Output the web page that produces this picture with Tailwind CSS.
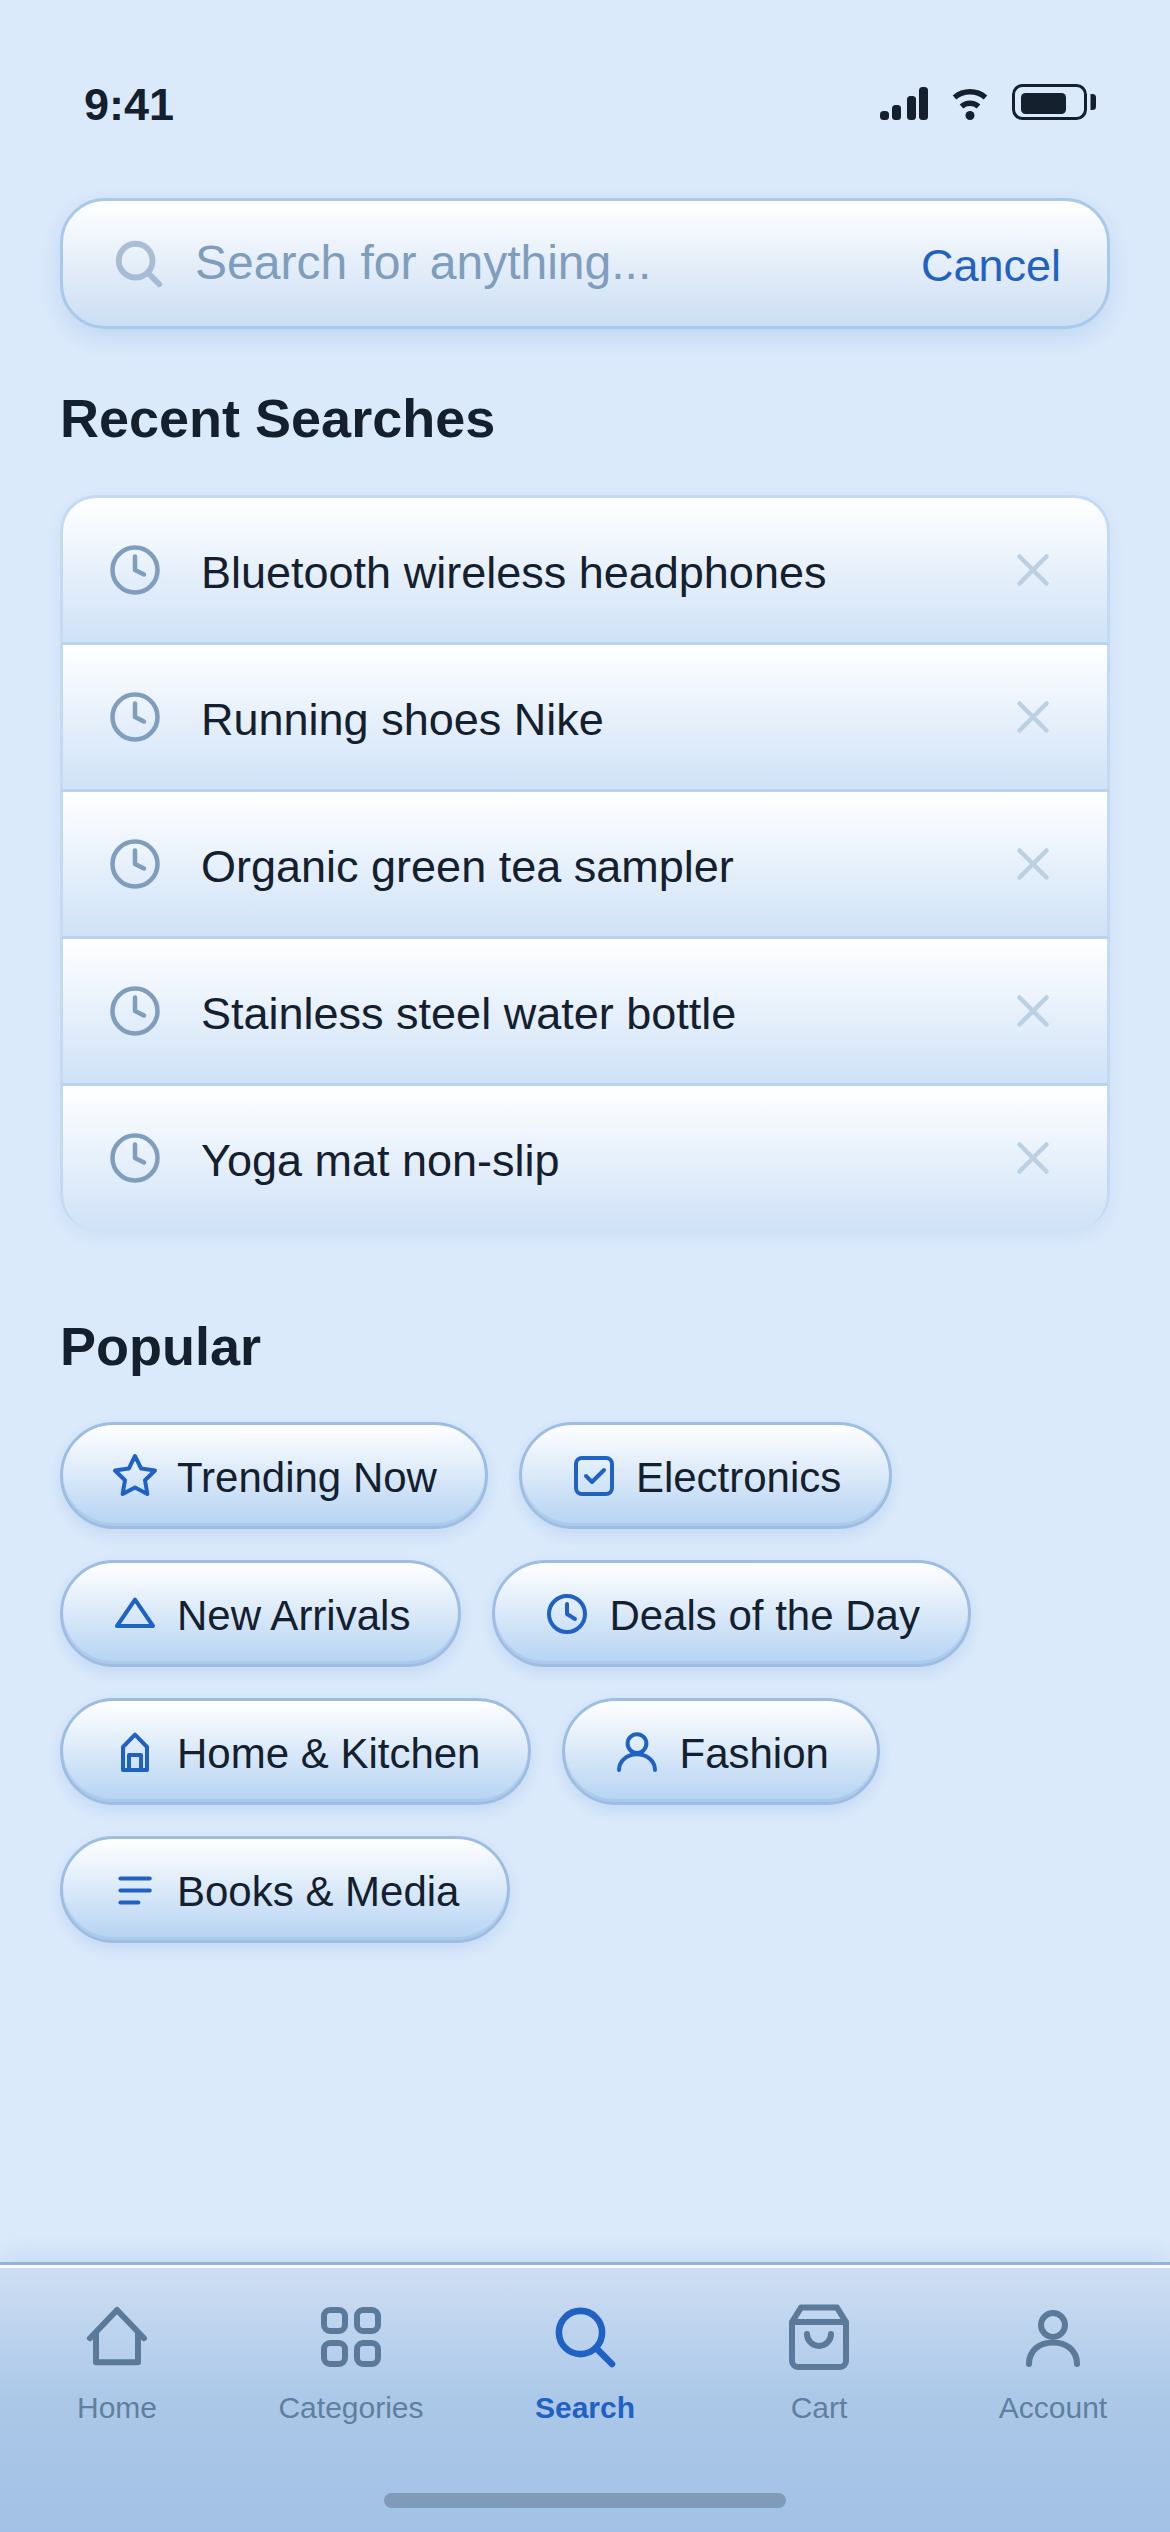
<!DOCTYPE html>
<html>

<head>
    <title>Search</title>
    <meta charset="UTF-8">
    <meta name="viewport" content="width=device-width, initial-scale=1.0">
    <script src="https://cdn.jsdelivr.net/npm/@tailwindcss/browser@4"></script>
</head>

<body class="bg-[#dbeafb] font-['Liberation_Sans',Arial,sans-serif] text-[#14202e]">
    <div class="flex flex-col w-[1170px] h-[2532px] overflow-hidden">

        <!-- Status bar -->
        <div class="h-[198px] shrink-0 pl-[84px] pr-[74px] pt-[79px] flex justify-between items-start">
            <span class="text-[45px] leading-[52px] font-bold">9:41</span>
            <svg class="mt-[5px]" width="216" height="36" viewBox="879 84 216 36" fill="#14202e">
                <rect x="879" y="111" width="9" height="9" rx="3.5" />
                <rect x="891" y="105" width="9" height="15" rx="3.5" />
                <rect x="906" y="96" width="9" height="24" rx="3.5" />
                <rect x="918" y="87" width="9" height="33" rx="3.5" />
                <circle cx="969" cy="115.5" r="4.5" />
                <path d="M953.500 97.500a24 24 0 0 1 31 0M960.500 106.500a13 13 0 0 1 17 0" fill="none" stroke="#14202e" stroke-width="5.500" />
                <rect x="1012.500" y="85.500" width="72" height="33" rx="9" fill="none" stroke="#14202e" stroke-width="3" />
                <rect x="1020" y="93" width="45" height="21" rx="4.500" />
                <path d="M1089.500 94h2a3.500 3.500 0 0 1 3.500 3.500v9a3.500 3.500 0 0 1-3.500 3.500h-2z" />
            </svg>
        </div>

        <!-- Search box -->
        <div class="mx-[60px] h-[131px] shrink-0 flex items-center pl-[49px] pr-[46px] rounded-[45px] border-[3px] border-[#a9c9ea] bg-gradient-to-b from-white to-[#cbdef3] shadow-[0_9px_24px_rgba(100,150,210,0.22)]">
            <svg class="shrink-0 opacity-60" width="54" height="54" viewBox="0 0 24 24" fill="none" stroke="#7f9dbd" stroke-width="2.600" stroke-linecap="round">
                <circle cx="10.500" cy="10.500" r="7.500" />
                <path d="M16 16l5 5" />
            </svg>
            <input type="text" placeholder="Search for anything..." class="flex-1 min-w-0 ml-[29px] mb-[2px] text-[48px] bg-transparent outline-none placeholder:text-[#7f9dbd]">
            <span class="text-[45px] leading-[52px] text-[#1f62c4] mt-[5px]">Cancel</span>
        </div>

        <h2 class="mt-[58px] mx-[60px] text-[54px] leading-[62px] font-bold">Recent Searches</h2>

        <!-- Recent searches -->
        <div class="mt-[46px] mx-[60px] rounded-[36px] shadow-[0_6px_18px_rgba(100,150,210,0.12)]">
            <div class="h-[150px] flex items-center pl-[45px] pr-[47px] gap-[39px] rounded-t-[36px] border-[3px] border-[#c3daf2] border-b-[#b9d3ef] bg-gradient-to-b from-white to-[#cfe2f7]">
                <svg class="shrink-0" width="54" height="54" viewBox="0 0 24 24" fill="none" stroke="#7f9dbd" stroke-width="2" stroke-linecap="round" stroke-linejoin="round"><circle cx="12" cy="12" r="10" /><path d="M12 6v6l4 2" /></svg>
                <span class="flex-1 mt-[6px] text-[45px] leading-[52px]">Bluetooth wireless headphones</span>
                <svg class="shrink-0" width="54" height="54" viewBox="0 0 24 24" fill="none" stroke="#bcd0e3" stroke-width="2" stroke-linecap="round"><path d="M6 6l12 12M18 6L6 18" /></svg>
            </div>
            <div class="h-[147px] flex items-center pl-[45px] pr-[47px] gap-[39px] border-x-[3px] border-b-[3px] border-x-[#c3daf2] border-b-[#b9d3ef] bg-gradient-to-b from-white to-[#cfe2f7]">
                <svg class="shrink-0" width="54" height="54" viewBox="0 0 24 24" fill="none" stroke="#7f9dbd" stroke-width="2" stroke-linecap="round" stroke-linejoin="round"><circle cx="12" cy="12" r="10" /><path d="M12 6v6l4 2" /></svg>
                <span class="flex-1 mt-[6px] text-[45px] leading-[52px]">Running shoes Nike</span>
                <svg class="shrink-0" width="54" height="54" viewBox="0 0 24 24" fill="none" stroke="#bcd0e3" stroke-width="2" stroke-linecap="round"><path d="M6 6l12 12M18 6L6 18" /></svg>
            </div>
            <div class="h-[147px] flex items-center pl-[45px] pr-[47px] gap-[39px] border-x-[3px] border-b-[3px] border-x-[#c3daf2] border-b-[#b9d3ef] bg-gradient-to-b from-white to-[#cfe2f7]">
                <svg class="shrink-0" width="54" height="54" viewBox="0 0 24 24" fill="none" stroke="#7f9dbd" stroke-width="2" stroke-linecap="round" stroke-linejoin="round"><circle cx="12" cy="12" r="10" /><path d="M12 6v6l4 2" /></svg>
                <span class="flex-1 mt-[6px] text-[45px] leading-[52px]">Organic green tea sampler</span>
                <svg class="shrink-0" width="54" height="54" viewBox="0 0 24 24" fill="none" stroke="#bcd0e3" stroke-width="2" stroke-linecap="round"><path d="M6 6l12 12M18 6L6 18" /></svg>
            </div>
            <div class="h-[147px] flex items-center pl-[45px] pr-[47px] gap-[39px] border-x-[3px] border-b-[3px] border-x-[#c3daf2] border-b-[#b9d3ef] bg-gradient-to-b from-white to-[#cfe2f7]">
                <svg class="shrink-0" width="54" height="54" viewBox="0 0 24 24" fill="none" stroke="#7f9dbd" stroke-width="2" stroke-linecap="round" stroke-linejoin="round"><circle cx="12" cy="12" r="10" /><path d="M12 6v6l4 2" /></svg>
                <span class="flex-1 mt-[6px] text-[45px] leading-[52px]">Stainless steel water bottle</span>
                <svg class="shrink-0" width="54" height="54" viewBox="0 0 24 24" fill="none" stroke="#bcd0e3" stroke-width="2" stroke-linecap="round"><path d="M6 6l12 12M18 6L6 18" /></svg>
            </div>
            <div class="h-[144px] flex items-center pl-[45px] pr-[47px] gap-[39px] rounded-b-[36px] border-x-[3px] border-x-[#c3daf2] bg-gradient-to-b from-white to-[#cfe2f7]">
                <svg class="shrink-0" width="54" height="54" viewBox="0 0 24 24" fill="none" stroke="#7f9dbd" stroke-width="2" stroke-linecap="round" stroke-linejoin="round"><circle cx="12" cy="12" r="10" /><path d="M12 6v6l4 2" /></svg>
                <span class="flex-1 mt-[6px] text-[45px] leading-[52px]">Yoga mat non-slip</span>
                <svg class="shrink-0" width="54" height="54" viewBox="0 0 24 24" fill="none" stroke="#bcd0e3" stroke-width="2" stroke-linecap="round"><path d="M6 6l12 12M18 6L6 18" /></svg>
            </div>
        </div>

        <h2 class="mt-[85px] mx-[60px] text-[54px] leading-[62px] font-bold">Popular</h2>

        <!-- Popular chips -->
        <div class="mt-[45px] mx-[60px] flex flex-col gap-[31px]">
            <div class="flex gap-[31px]">
                <div class="h-[107px] flex items-center gap-[18px] px-[48px] rounded-full border-[3px] border-[#9dbde3] bg-gradient-to-b from-white to-[#b5d3f2] shadow-[0_6px_15px_rgba(100,150,210,0.2),inset_0_-3px_0_rgba(140,180,225,0.3)] text-[42px]">
                    <svg width="48" height="48" viewBox="0 0 24 24" fill="none" stroke="#1f62c4" stroke-width="2" stroke-linecap="round" stroke-linejoin="round"><path d="M12 2l3.090 6.260L22 9.270l-5 4.870L18.180 21 12 17.770 5.820 21 7 14.140 2 9.270l6.910-1.010z" /></svg>
                    <span class="mt-[3px]">Trending Now</span>
                </div>
                <div class="h-[107px] flex items-center gap-[18px] px-[48px] rounded-full border-[3px] border-[#9dbde3] bg-gradient-to-b from-white to-[#b5d3f2] shadow-[0_6px_15px_rgba(100,150,210,0.2),inset_0_-3px_0_rgba(140,180,225,0.3)] text-[42px]">
                    <svg width="48" height="48" viewBox="0 0 24 24" fill="none" stroke="#1f62c4" stroke-width="2" stroke-linecap="round" stroke-linejoin="round"><rect x="3" y="3" width="18" height="18" rx="3" /><path d="M8 12l3 3 6-6" /></svg>
                    <span class="mt-[3px]">Electronics</span>
                </div>
            </div>
            <div class="flex gap-[31px]">
                <div class="h-[107px] flex items-center gap-[18px] px-[48px] rounded-full border-[3px] border-[#9dbde3] bg-gradient-to-b from-white to-[#b5d3f2] shadow-[0_6px_15px_rgba(100,150,210,0.2),inset_0_-3px_0_rgba(140,180,225,0.3)] text-[42px]">
                    <svg width="48" height="48" viewBox="0 0 24 24" fill="none" stroke="#1f62c4" stroke-width="2" stroke-linecap="round" stroke-linejoin="round"><path d="M12 4.800L21 18H3z" /></svg>
                    <span class="mt-[3px]">New Arrivals</span>
                </div>
                <div class="h-[107px] flex items-center gap-[18px] px-[48px] rounded-full border-[3px] border-[#9dbde3] bg-gradient-to-b from-white to-[#b5d3f2] shadow-[0_6px_15px_rgba(100,150,210,0.2),inset_0_-3px_0_rgba(140,180,225,0.3)] text-[42px]">
                    <svg width="48" height="48" viewBox="0 0 24 24" fill="none" stroke="#1f62c4" stroke-width="2" stroke-linecap="round" stroke-linejoin="round"><circle cx="12" cy="12" r="9" /><path d="M12 7v5l4 2.500" /></svg>
                    <span class="mt-[3px]">Deals of the Day</span>
                </div>
            </div>
            <div class="flex gap-[31px]">
                <div class="h-[107px] flex items-center gap-[18px] px-[48px] rounded-full border-[3px] border-[#9dbde3] bg-gradient-to-b from-white to-[#b5d3f2] shadow-[0_6px_15px_rgba(100,150,210,0.2),inset_0_-3px_0_rgba(140,180,225,0.3)] text-[42px]">
                    <svg width="48" height="48" viewBox="0 0 24 24" fill="none" stroke="#1f62c4" stroke-width="2" stroke-linecap="round" stroke-linejoin="round"><path d="M6 21V9.500l6-6.200 6 6.200V21zM9 21v-7.500h6V21" /></svg>
                    <span class="mt-[3px]">Home &amp; Kitchen</span>
                </div>
                <div class="h-[107px] flex items-center gap-[18px] px-[48px] rounded-full border-[3px] border-[#9dbde3] bg-gradient-to-b from-white to-[#b5d3f2] shadow-[0_6px_15px_rgba(100,150,210,0.2),inset_0_-3px_0_rgba(140,180,225,0.3)] text-[42px]">
                    <svg width="48" height="48" viewBox="0 0 24 24" fill="none" stroke="#1f62c4" stroke-width="2" stroke-linecap="round" stroke-linejoin="round"><circle cx="12" cy="7.800" r="4.700" /><path d="M3 21c0-4.400 4-7.900 9-7.900s9 3.500 9 7.900" /></svg>
                    <span class="mt-[3px]">Fashion</span>
                </div>
            </div>
            <div class="flex gap-[31px]">
                <div class="h-[107px] flex items-center gap-[18px] px-[48px] rounded-full border-[3px] border-[#9dbde3] bg-gradient-to-b from-white to-[#b5d3f2] shadow-[0_6px_15px_rgba(100,150,210,0.2),inset_0_-3px_0_rgba(140,180,225,0.3)] text-[42px]">
                    <svg width="48" height="48" viewBox="0 0 24 24" fill="none" stroke="#1f62c4" stroke-width="2" stroke-linecap="round"><path d="M4.700 6.200h14.700M4.700 12.200h14.700M4.700 18.200h9" /></svg>
                    <span class="mt-[3px]">Books &amp; Media</span>
                </div>
            </div>
        </div>

        <div class="flex-1"></div>

        <!-- Tab bar -->
        <div class="relative h-[270px] shrink-0 border-t-[3px] border-[#8fb2e0] bg-gradient-to-b from-[#cfdff3] via-[#abc8e8] to-[#a3c1e6] shadow-[0_-6px_24px_rgba(100,150,210,0.2),inset_0_3px_0_white]">
            <div class="grid grid-cols-5 pt-[36px]">
                <div class="flex flex-col items-center text-[#5f7fa0]">
                    <svg width="72" height="72" viewBox="0 0 24 24" fill="none" stroke="#5b7a9a" stroke-width="2" stroke-linecap="round" stroke-linejoin="round"><path d="M3 12.400L12 3l9 9.400M5 10.500v9.900h14v-9.900" /></svg>
                    <span class="mt-[17px] text-[30px] leading-[36px]">Home</span>
                </div>
                <div class="flex flex-col items-center text-[#5f7fa0]">
                    <svg width="72" height="72" viewBox="0 0 24 24" fill="none" stroke="#5b7a9a" stroke-width="2"><rect x="3" y="3" width="7" height="7" rx="2" /><rect x="14" y="3" width="7" height="7" rx="2" /><rect x="3" y="14" width="7" height="7" rx="2" /><rect x="14" y="14" width="7" height="7" rx="2" /></svg>
                    <span class="mt-[17px] text-[30px] leading-[36px]">Categories</span>
                </div>
                <div class="flex flex-col items-center text-[#1f62c4]">
                    <svg width="72" height="72" viewBox="0 0 24 24" fill="none" stroke="#1f62c4" stroke-width="2.200" stroke-linecap="round"><circle cx="10.500" cy="10.500" r="7.200" /><path d="M15.800 15.800L21 21" /></svg>
                    <span class="mt-[17px] text-[30px] leading-[36px] font-bold">Search</span>
                </div>
                <div class="flex flex-col items-center text-[#5f7fa0]">
                    <svg width="72" height="72" viewBox="0 0 24 24" fill="none" stroke="#5b7a9a" stroke-width="2" stroke-linecap="round" stroke-linejoin="round"><path d="M6 2.200h12L21 7v13a2 2 0 0 1-2 2H5a2 2 0 0 1-2-2V7zM3 7h18M8 11a4 4 0 0 0 8 0" /></svg>
                    <span class="mt-[17px] text-[30px] leading-[36px]">Cart</span>
                </div>
                <div class="flex flex-col items-center text-[#5f7fa0]">
                    <svg width="72" height="72" viewBox="0 0 24 24" fill="none" stroke="#5b7a9a" stroke-width="2" stroke-linecap="round" stroke-linejoin="round"><circle cx="12" cy="8" r="4" /><path d="M4 21c0-4.500 3.500-7.200 8-7.200s8 2.700 8 7.200" /></svg>
                    <span class="mt-[17px] text-[30px] leading-[36px]">Account</span>
                </div>
            </div>
            <div class="absolute left-[384px] bottom-[24px] w-[402px] h-[15px] rounded-full bg-[#809bb9]"></div>
        </div>
    </div>
</body>

</html>
